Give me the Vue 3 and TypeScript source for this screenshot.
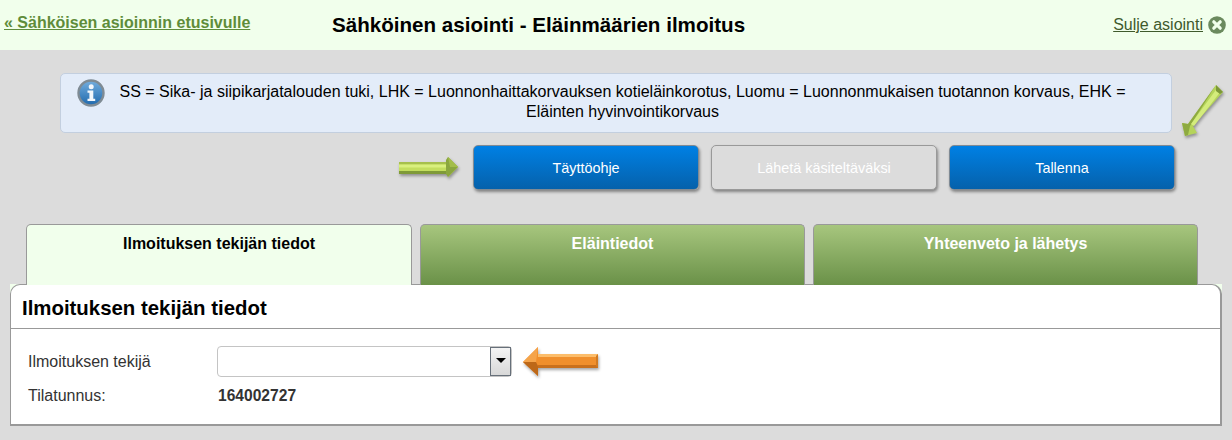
<script setup lang="ts">
const tabs = [
  { label: 'Ilmoituksen tekijän tiedot', active: true },
  { label: 'Eläintiedot', active: false },
  { label: 'Yhteenveto ja lähetys', active: false }
]
</script>

<template>
  <div class="page">
    <header class="topbar">
      <a class="back-link" href="#">« Sähköisen asioinnin etusivulle</a>
      <h1 class="title">Sähköinen asiointi - Eläinmäärien ilmoitus</h1>
      <a class="close-link" href="#">Sulje asiointi</a>
      <svg class="close-icon" width="18" height="18" viewBox="0 0 18 18">
        <circle cx="9" cy="9" r="8.8" fill="#6b8a5e" />
        <path d="M5.8 5.8l6.4 6.4M12.2 5.8l-6.4 6.4" stroke="#f1ffec" stroke-width="3.2" stroke-linecap="round" />
      </svg>
    </header>

    <div class="info">
      <svg class="info-icon" width="28" height="28" viewBox="0 0 28 28">
        <defs>
          <linearGradient id="infoFill" x1="0" y1="0" x2="0" y2="1">
            <stop offset="0" stop-color="#74aede" />
            <stop offset="1" stop-color="#1f69ad" />
          </linearGradient>
        </defs>
        <circle cx="14" cy="14" r="12.5" fill="url(#infoFill)" stroke="#7f8b94" stroke-width="2.4" />
        <circle cx="14.2" cy="7.8" r="2.5" fill="#f3f7fb" />
        <path d="M10.5 11.5h5.8v8.2h1.9v2.2h-7.7v-2.2h1.9v-6h-1.9z" fill="#f3f7fb" />
      </svg>
      <p class="info-text">SS = Sika- ja siipikarjatalouden tuki, LHK = Luonnonhaittakorvauksen kotieläinkorotus, Luomu = Luonnonmukaisen tuotannon korvaus, EHK = Eläinten hyvinvointikorvaus</p>
    </div>

    <div class="actions">
      <button class="btn">Täyttöohje</button>
      <button class="btn disabled">Lähetä käsiteltäväksi</button>
      <button class="btn">Tallenna</button>
    </div>

    <nav class="tabs">
      <div v-for="tab in tabs" :key="tab.label" class="tab" :class="{ active: tab.active }">{{ tab.label }}</div>
    </nav>

    <div class="panel-wrap">
      <section class="panel">
        <h2 class="panel-title">Ilmoituksen tekijän tiedot</h2>
        <div class="panel-body">
          <div class="row">
            <label class="row-label">Ilmoituksen tekijä</label>
            <div class="select">
              <span class="select-btn"><i class="caret"></i></span>
            </div>
          </div>
          <div class="row second">
            <span class="row-label">Tilatunnus:</span>
            <strong class="row-value">164002727</strong>
          </div>
        </div>
      </section>
    </div>

    <!-- ohjenuolet kuvan paalla -->
    <svg class="arrow arrow-right" width="62" height="22" viewBox="0 0 62 22">
      <path d="M1 5h49V0l10 10-10 10v-3H1z" fill="#c3de5f" />
      <path d="M1 5h49v2.5H1z" fill="#a6c04c" />
      <path d="M1 7.5h49v3H1z" fill="#d9f07e" />
      <path d="M1 14h49v3H1z" fill="#7f9a38" />
      <path d="M50 0l10 10-10 10-2-3V3z" fill="#8aa63e" />
      <path d="M50 0l10 10H52z" fill="#a3bd4a" />
    </svg>
    <svg class="arrow arrow-diag" width="44" height="54" viewBox="0 0 44 54">
      <path d="M35 1l7 7-30 34 4 7-12 3-3-13 6 1z" fill="#b5d45a" />
      <path d="M35 1L7 40l-6-1 3 13 3-1 2-9z" fill="#8eaa40" />
      <path d="M37 3L10 40l3 2L40 7z" fill="#d4ec7c" />
      <path d="M35 1l7 7-3 2-4-3z" fill="#7c9838" />
    </svg>
    <svg class="arrow arrow-left" width="78" height="34" viewBox="0 0 78 34">
      <path d="M76 7H16V0L1 15l15 14v-8h60z" fill="#f08f2c" />
      <path d="M76 7H16v3h60z" fill="#fcbd6a" />
      <path d="M76 18H16v3h60z" fill="#c9701c" />
      <path d="M76 7v14l-2-2V9z" fill="#d07a22" />
      <path d="M16 0L1 15h13z" fill="#f5a44a" />
      <path d="M1 15l15 14V19l-2-4z" fill="#bd6818" />
    </svg>
  </div>
</template>

<style scoped>
.page {
  position: relative;
  width: 1232px;
  height: 440px;
  overflow: hidden;
  background: #dcdcdc;
  font-family: "Liberation Sans", Arial, sans-serif;
  color: #000;
}

.topbar {
  display: flex;
  align-items: flex-start;
  height: 50px;
  padding: 0 6px 0 4px;
  box-sizing: border-box;
  background: #f1ffec;
}

.back-link {
  margin-top: 14px;
  width: 328px;
  font-size: 16px;
  font-weight: bold;
  color: #5f8c3a;
}

.title {
  margin: 13px 0 0;
  font-size: 20.6px;
  line-height: 24px;
  font-weight: bold;
}

.close-link {
  margin: 16px 0 0 auto;
  font-size: 16px;
  color: #3f5a2c;
}

.close-icon {
  margin: 16px 0 0 5px;
}

.info {
  display: flex;
  margin: 23px 60px 0;
  width: 1112px;
  height: 60px;
  box-sizing: border-box;
  padding: 5px 36px 0 16px;
  background: #e3ecf9;
  border: 1px solid #c3cfdf;
  border-radius: 5px;
}

.info-icon {
  flex-shrink: 0;
}

.info-text {
  margin: 3px 0 0;
  padding-left: 5px;
  font-size: 16px;
  line-height: 20px;
  text-align: center;
}

.actions {
  display: flex;
  gap: 12px;
  margin: 12px 0 0 473px;
}

.btn {
  width: 226px;
  height: 45px;
  padding: 0;
  border: 1px solid #7f8a94;
  border-radius: 5px;
  background: linear-gradient(#0080e4, #0561ab);
  box-shadow: 1px 2px 3px rgba(0, 0, 0, .4);
  color: #fff;
  font-family: inherit;
  font-size: 14.4px;
}

.btn.disabled {
  border-color: #999;
  background: #dcdcdc;
}

.tabs {
  display: flex;
  gap: 8px;
  margin: 34px 0 0 26px;
}

.tab {
  width: 385px;
  height: 61px;
  box-sizing: border-box;
  padding-top: 10px;
  border: 1px solid #999;
  border-bottom: none;
  border-radius: 5px 5px 0 0;
  background: linear-gradient(#a7c67e, #6a9148);
  color: #fff;
  font-size: 16px;
  font-weight: bold;
  text-align: center;
}

.tab.active {
  width: 386px;
  background: #f1ffec;
  color: #000;
}

.panel-wrap {
  width: 1212px;
  margin: -1px 0 0 10px;
  background: #f1ffec;
}

.panel {
  height: 142px;
  box-sizing: border-box;
  background: #fff;
  border: 1px solid #999;
  border-right-width: 2px;
  border-bottom-width: 2px;
  border-radius: 10px 10px 0 0;
}

.panel-title {
  margin: 0;
  height: 44px;
  box-sizing: border-box;
  padding: 11px 0 0 11px;
  border-bottom: 1px solid #999;
  font-size: 20.4px;
  line-height: 24px;
  font-weight: bold;
}

.panel-body {
  padding: 17px 0 0 17px;
  font-size: 16px;
  color: #333;
}

.row {
  display: flex;
  align-items: center;
}

.row.second {
  margin-top: 10px;
}

.row-label {
  width: 190px;
}

.row:first-child .row-label {
  width: 189px;
}

.select {
  display: flex;
  justify-content: flex-end;
  width: 295px;
  height: 31px;
  box-sizing: border-box;
  background: #fff;
  border: 1px solid #c4c4c4;
  border-radius: 4px;
}

.select-btn {
  display: flex;
  justify-content: center;
  padding-top: 10px;
  width: 21px;
  box-sizing: border-box;
  border: 1px solid #67707a;
  background: linear-gradient(#f4f4f4, #d8d8d8);
}

.caret {
  width: 0;
  height: 0;
  border-left: 5px solid transparent;
  border-right: 5px solid transparent;
  border-top: 5px solid #000;
}

.row-value {
  font-size: 15.6px;
}

.arrow {
  position: absolute;
  filter: drop-shadow(1px 2px 1.5px rgba(0, 0, 0, .35));
}

.arrow-right {
  left: 398px;
  top: 157px;
}

.arrow-diag {
  left: 1181px;
  top: 84px;
}

.arrow-left {
  left: 522px;
  top: 347px;
}
</style>
